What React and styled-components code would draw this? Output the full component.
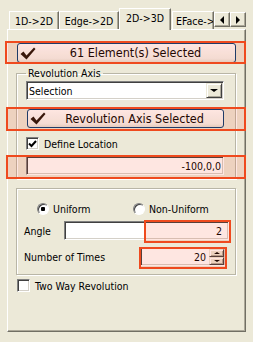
import styled, { createGlobalStyle } from 'styled-components'

const Global = createGlobalStyle`
  html, body { margin: 0; padding: 0; background: #ECE9D8; }
  body {
    font-family: "DejaVu Sans Condensed", "DejaVu Sans", sans-serif;
    font-stretch: condensed;
    font-size: 10.5px;
    line-height: 12px;
    color: #000;
  }
`

const Window = styled.div`
  box-sizing: border-box;
  width: 253px;
  height: 342px;
  padding-top: 8px;
  overflow: hidden;
`

const TabRow = styled.div`
  display: flex;
  align-items: flex-end;
  height: 21px;
  margin-left: 9px;
  position: relative;
  z-index: 1;
`

const Tab = styled.div`
  box-sizing: border-box;
  flex: none;
  width: ${p => p.$w}px;
  height: ${p => (p.$active ? 22 : 18)}px;
  margin-bottom: ${p => (p.$active ? -1 : 0)}px;
  margin-right: ${p => p.$gap || 0}px;
  padding: 3px 0 0 ${p => p.$pad || 0}px;
  text-align: ${p => (p.$pad ? 'left' : 'center')};
  background: #ECE9D8;
  border: 1px solid;
  border-color: #fff #716F64 transparent #fff;
  border-bottom: none;
  box-shadow: inset -1px 0 0 #ACA899;
  white-space: nowrap;
  overflow: hidden;
`

const ScrollBtn = styled.div`
  box-sizing: border-box;
  flex: none;
  width: 16px;
  height: 15px;
  margin-bottom: 2px;
  display: flex;
  align-items: center;
  justify-content: center;
  background: #ECE9D8;
  border: 1px solid;
  border-color: #fff #716F64 #716F64 #fff;
  box-shadow: inset -1px -1px 0 #ACA899;
  &::before {
    content: '';
    width: 0;
    height: 0;
    border-top: 4px solid transparent;
    border-bottom: 4px solid transparent;
    ${p => (p.$dir === 'left' ? 'border-right: 4px solid #000;' : 'border-left: 4px solid #000;')}
  }
`

const Panel = styled.div`
  box-sizing: border-box;
  margin-left: 7px;
  width: 239px;
  height: 303px;
  padding: 13px 9px 0 8px;
  display: flex;
  flex-direction: column;
  border: 1px solid;
  border-color: #fff #716F64 #716F64 #fff;
  box-shadow: inset -1px -1px 0 #ACA899;
`

const Mark = styled.span`
  position: absolute;
  z-index: 2;
  top: ${p => p.$t}px;
  right: ${p => p.$r}px;
  bottom: ${p => p.$b}px;
  left: ${p => p.$l}px;
  border: 2px solid #EF4A1E;
  background: rgba(250, 60, 20, 0.13);
  pointer-events: none;
`

const XPButton = styled.div`
  position: relative;
  box-sizing: border-box;
  height: ${p => p.$h}px;
  margin: ${p => p.$mt || 0}px 0 0 1px;
  display: flex;
  align-items: center;
  padding-left: 2px;
  border: 1px solid #003C74;
  border-radius: 3px;
  background: linear-gradient(#fff, #F4F3EE 80%, #E3E1D6);
  font-size: 12.5px;
  svg { flex: none; }
  span.label { flex: 1; text-align: center; }
`

const Group = styled.fieldset`
  position: relative;
  margin: ${p => p.$mt}px 0 0;
  min-width: 0;
  padding: ${p => p.$pad};
  border: 1px solid #B9B6A6;
  box-shadow: inset 1px 1px 0 #fff, 1px 1px 0 #fff;
  legend {
    padding: 0 2px;
    line-height: 12px;
  }
`

const Sunken = styled.div`
  position: relative;
  box-sizing: border-box;
  height: 19px;
  width: ${p => (p.$w ? `${p.$w}px` : 'auto')};
  margin-top: ${p => p.$mt || 0}px;
  display: flex;
  align-items: center;
  background: #fff;
  border: 1px solid;
  border-color: #808080 #fff #fff #808080;
  box-shadow: inset 1px 1px 0 #404040, inset -1px -1px 0 #D4D0C8;
  padding: 0 ${p => p.$pr || 0}px 0 3px;
  justify-content: ${p => (p.$right ? 'flex-end' : 'flex-start')};
`

const Combo = styled(Sunken)`
  justify-content: space-between;
  padding: 0 1px 0 2px;
`

const RaisedBtn = styled.div`
  box-sizing: border-box;
  width: ${p => p.$w}px;
  height: ${p => p.$h}px;
  display: flex;
  align-items: center;
  justify-content: center;
  background: #ECE9D8;
  border: 1px solid;
  border-color: #ECE9D8 #404040 #404040 #ECE9D8;
  box-shadow: inset 1px 1px 0 #fff, inset -1px -1px 0 #ACA899;
  &::before {
    content: '';
    border-left: ${p => p.$s}px solid transparent;
    border-right: ${p => p.$s}px solid transparent;
    ${p => (p.$up ? `border-bottom: ${p.$s - 1}px solid #000;` : `border-top: ${p.$s - 1}px solid #000;`)}
  }
`

const Spin = styled.div`
  display: flex;
  flex-direction: column;
  margin-left: 3px;
`

const CheckRow = styled.label`
  display: flex;
  align-items: center;
  gap: 5px;
  margin: ${p => p.$mt}px 0 0 ${p => p.$ml || 0}px;
  height: 13px;
`

const Box = styled.span`
  box-sizing: border-box;
  width: 13px;
  height: 13px;
  display: flex;
  align-items: center;
  justify-content: center;
  background: #fff;
  border: 1px solid;
  border-color: #808080 #fff #fff #808080;
  box-shadow: inset 1px 1px 0 #404040, inset -1px -1px 0 #D4D0C8;
`

const RadioRow = styled.div`
  display: flex;
  align-items: center;
  height: 12px;
  padding-left: 13px;
`

const Radio = styled.span`
  display: flex;
  align-items: center;
  gap: 4px;
  width: ${p => p.$w}px;
  &::before {
    content: '';
    box-sizing: border-box;
    width: 12px;
    height: 12px;
    border-radius: 50%;
    border: 1px solid;
    border-color: #808080 #fff #fff #808080;
    background: ${p => (p.$on ? 'radial-gradient(circle, #000 0 2px, #fff 2.5px)' : '#fff')};
    box-shadow: inset 1px 1px 0 #404040;
  }
`

const FieldRow = styled.div`
  display: flex;
  align-items: center;
  margin-top: ${p => p.$mt}px;
  span.name { width: ${p => p.$lw}px; flex: none; }
`

const BigCheck = () => (
  <svg width="16" height="13" viewBox="0 0 16 13">
    <polygon points="0.5,7 3.5,4.5 6.5,8.5 14,0.5 15.5,2 6.5,12.5" fill="#1d1209" />
  </svg>
)

const SmallCheck = () => (
  <svg width="9" height="8" viewBox="0 0 9 8">
    <path d="M1 3.5 L3.5 6 L8 1" fill="none" stroke="#000" strokeWidth="2" />
  </svg>
)

export default function App() {
  return (
    <Window>
      <Global />
      <TabRow>
        <Tab $w={50}>1D-&gt;2D</Tab>
        <Tab $w={60}>Edge-&gt;2D</Tab>
        <Tab $w={52} $active $gap={1}>2D-&gt;3D</Tab>
        <Tab $w={42} $pad={3}>EFace-&gt;</Tab>
        <ScrollBtn $dir="left" />
        <ScrollBtn $dir="right" />
      </TabRow>
      <Panel>
        <XPButton $h={20}>
          <BigCheck />
          <span className="label">61 Element(s) Selected</span>
          <Mark $t={-3} $r={-11} $b={-2} $l={-13} />
        </XPButton>

        <Group $mt={4} $pad="2px 11px 3px 9px">
          <legend>Revolution Axis</legend>
          <Combo>
            Selection
            <RaisedBtn $w={16} $h={15} $s={4} />
          </Combo>
          <XPButton $h={19} $mt={9}>
            <BigCheck />
            <span className="label">Revolution Axis Selected</span>
            <Mark $t={-3} $r={-23} $b={-4} $l={-22} />
          </XPButton>
          <CheckRow $mt={9}>
            <Box><SmallCheck /></Box>
            Define Location
          </CheckRow>
          <Sunken $right $pr={2} $mt={6}>
            -100,0,0
            <Mark $t={-2} $r={-23} $b={-5} $l={-21} />
          </Sunken>
        </Group>

        <Group $mt={9} $pad="14px 6px 8px 7px">
          <RadioRow>
            <Radio $on $w={96}>Uniform</Radio>
            <Radio>Non-Uniform</Radio>
          </RadioRow>
          <FieldRow $mt={6} $lw={40}>
            <span className="name">Angle</span>
            <Sunken $w={165} $right $pr={6}>
              2
              <Mark $t={-2} $r={-3} $b={-4} $l={79} />
            </Sunken>
          </FieldRow>
          <FieldRow $mt={7} $lw={116}>
            <span className="name">Number of Times</span>
            <Sunken $w={86} $right $pr={1}>
              20
              <Spin>
                <RaisedBtn $up $w={15} $h={8} $s={3} />
                <RaisedBtn $w={15} $h={8} $s={3} />
              </Spin>
              <Mark $t={-1} $r={-2} $b={-4} $l={-2} />
            </Sunken>
          </FieldRow>
        </Group>

        <CheckRow $mt={4} $ml={1}>
          <Box />
          Two Way Revolution
        </CheckRow>
      </Panel>
    </Window>
  )
}
